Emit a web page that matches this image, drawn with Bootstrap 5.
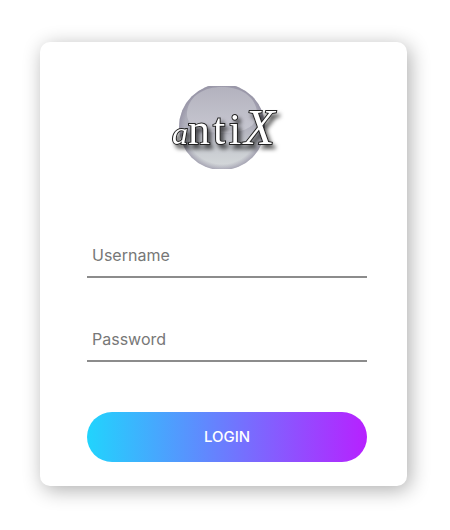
<!DOCTYPE html>
<html lang="en">
<head>
<meta charset="utf-8">
<meta name="viewport" content="width=device-width, initial-scale=1">
<title>antiX Login</title>
<link href="https://cdn.jsdelivr.net/npm/bootstrap@5.3.0/dist/css/bootstrap.min.css" rel="stylesheet">
<style>
body { font-family: Inter, "Liberation Sans", sans-serif; background: #fff; }
.login-page { padding: 42px 43px 44px 40px; }
.login-card { max-width: 390px; border-radius: 10px; padding: 33px 40px 24px 47px; box-shadow: 3px 4px 20px rgba(0, 0, 0, .32); }
.brand-logo { width: 130px; height: 105px; margin-bottom: 53px; }
.login-field { height: 45px; padding: 0 5px; border: 0; border-bottom: 2px solid #8c8c8c; border-radius: 0; background: transparent; font-size: 16px; color: #555; margin-bottom: 39px; }
.login-field:focus { box-shadow: none; background: transparent; border-color: #21d4fd; }
.login-field::placeholder { color: #777; opacity: 1; }
.login-button { height: 50px; margin-top: 11px; border: 0; color: #fff; font-size: 15px; font-weight: 500; background: linear-gradient(to right, #21d4fd, #b721ff); }
.login-button:hover { color: #fff; }
</style>
</head>
<body>
<main class="login-page">
  <form class="login-card bg-white mx-auto d-flex flex-column">
    <svg class="brand-logo align-self-center" viewBox="2 0 130 105" role="img" aria-label="antiX">
      <defs>
        <linearGradient id="orb" x1="0" y1="0" x2="0" y2="1">
          <stop offset="0" stop-color="#a5a4b1"/><stop offset=".5" stop-color="#b0b0bc"/><stop offset=".75" stop-color="#c8cbd0"/><stop offset="1" stop-color="#d6dadc"/>
        </linearGradient>
        <radialGradient id="rim">
          <stop offset=".86" stop-color="#8f8ba0" stop-opacity="0"/><stop offset="1" stop-color="#8f8ba0" stop-opacity=".65"/>
        </radialGradient>
        <linearGradient id="gloss" x1="0" y1="0" x2="0" y2="1">
          <stop offset="0" stop-color="#b3b2be"/><stop offset="1" stop-color="#cbcbd4" stop-opacity=".85"/>
        </linearGradient>
        <filter id="cast" x="-20%" y="-20%" width="150%" height="160%">
          <feDropShadow dx="3" dy="4" stdDeviation="2" flood-color="#000" flood-opacity=".65"/>
        </filter>
        <clipPath id="crop"><rect x="10" y="11" width="110" height="83"/></clipPath>
      </defs>
      <g clip-path="url(#crop)">
        <circle cx="62" cy="52" r="43" fill="url(#orb)"/>
        <circle cx="62" cy="52" r="43" fill="url(#rim)"/>
        <path d="M27 37C29 20 45 12 62 12s33 8 35 25c1 13-10 21-35 21S26 50 27 37Z" fill="url(#gloss)"/>
      </g>
      <g font-family="Liberation Serif, serif" font-size="44" fill="#fff" stroke="#222" stroke-width="2" paint-order="stroke" filter="url(#cast)">
        <text y="69"><tspan x="12" font-size="32" font-style="italic">a</tspan><tspan x="28">n</tspan><tspan x="53">t</tspan><tspan x="69">i</tspan><tspan x="84" font-size="50" font-style="italic">X</tspan></text>
      </g>
    </svg>
    <label class="visually-hidden" for="username">Username</label>
    <input class="form-control login-field" type="text" id="username" placeholder="Username" autocomplete="username">
    <label class="visually-hidden" for="password">Password</label>
    <input class="form-control login-field" type="password" id="password" placeholder="Password" autocomplete="current-password">
    <button class="btn login-button rounded-pill w-100" type="submit">LOGIN</button>
  </form>
</main>
<script src="https://cdn.jsdelivr.net/npm/bootstrap@5.3.0/dist/js/bootstrap.bundle.min.js"></script>
</body>
</html>
